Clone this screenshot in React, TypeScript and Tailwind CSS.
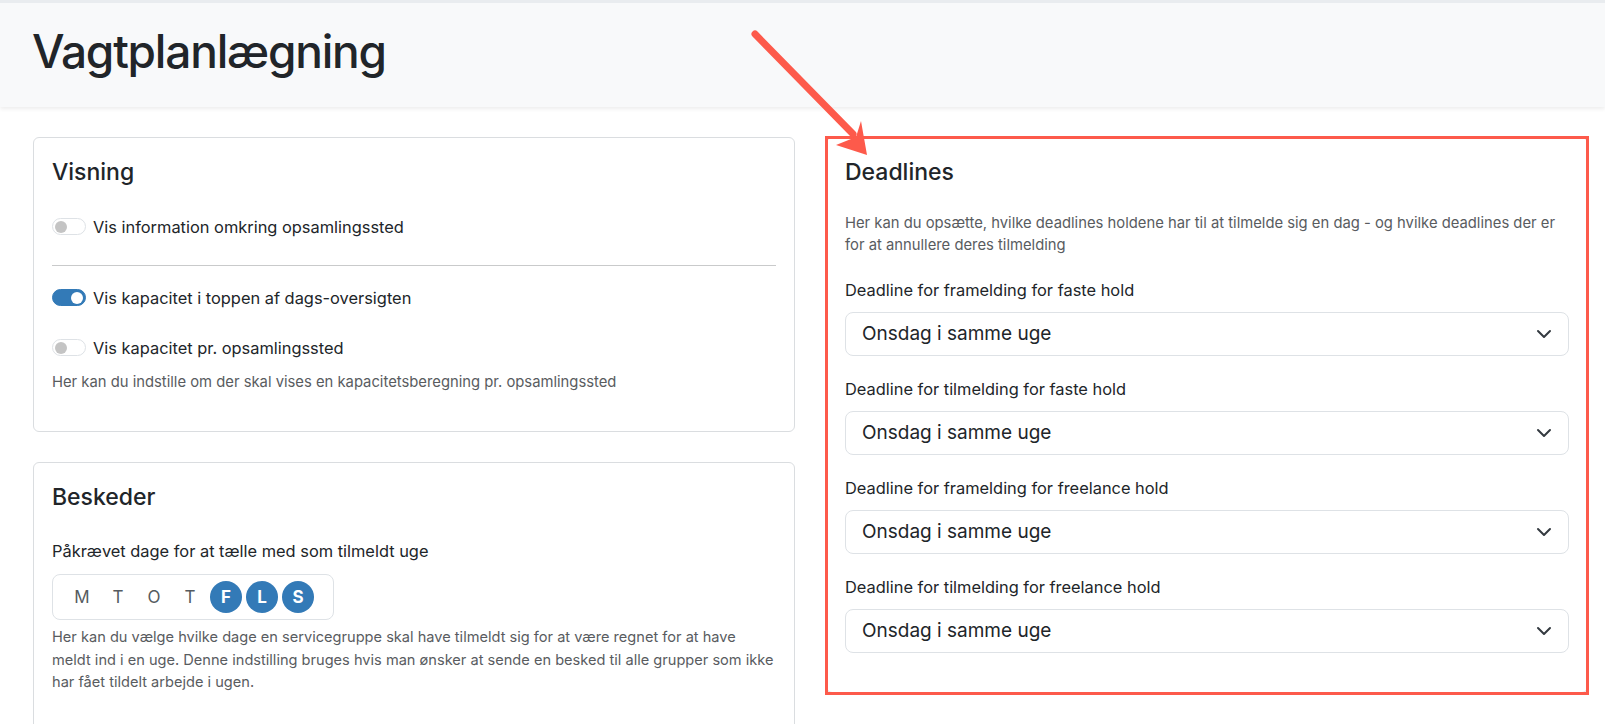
import React from "react";

const deadlines = [
  "Deadline for framelding for faste hold",
  "Deadline for tilmelding for faste hold",
  "Deadline for framelding for freelance hold",
  "Deadline for tilmelding for freelance hold",
];

const days = [
  { label: "M", on: false },
  { label: "T", on: false },
  { label: "O", on: false },
  { label: "T", on: false },
  { label: "F", on: true },
  { label: "L", on: true },
  { label: "S", on: true },
];

function Toggle({ on }: { on: boolean }) {
  return (
    <span
      className={
        on
          ? "flex items-center justify-end w-[34px] h-[17px] rounded-full border border-[#337ab7] bg-[#337ab7] px-[2px] shrink-0"
          : "flex items-center justify-start w-[34px] h-[17px] rounded-full border border-[#dee2e6] bg-white px-[2px] shrink-0"
      }
    >
      <span className={on ? "w-[12px] h-[12px] rounded-full bg-white" : "w-[12px] h-[12px] rounded-full bg-[#c4c4c4]"} />
    </span>
  );
}

function SwitchRow({ on, label, className }: { on: boolean; label: string; className: string }) {
  return (
    <div className={"flex items-center h-6 " + className}>
      <Toggle on={on} />
      <span className="ml-[7px] text-[16.4px] leading-6 text-[#212529]">{label}</span>
    </div>
  );
}

function SelectBox() {
  return (
    <div className="flex items-center justify-between h-[44px] border border-[#dee2e6] rounded-lg bg-white pl-[16px] pr-[16px]">
      <span className="text-[19px] leading-[30px] text-[#212529]">Onsdag i samme uge</span>
      <svg width="16" height="16" viewBox="0 0 16 16" fill="none">
        <path d="m2 5 6 6 6-6" stroke="#343a40" strokeWidth="2" strokeLinecap="round" strokeLinejoin="round" />
      </svg>
    </div>
  );
}

export default function App() {
  return (
    <div className="relative h-[724px] overflow-hidden bg-white font-['Inter',sans-serif] text-[#212529]">
      {/* Header */}
      <div className="border-t-[3px] border-[#e9ecef] bg-[#f8f9fa] shadow-[0_2px_4px_rgba(0,0,0,0.075)] pt-[21px] pb-[28px] pl-[32px]">
        <h1 className="text-[46px] leading-[1.2] font-medium tracking-[-1.2px]">Vagtplanlægning</h1>
      </div>

      <div className="grid grid-cols-[762px_762px] gap-[31px] pl-[33px] pt-[30px]">
        {/* Left column */}
        <div>
          <div className="border border-[#dadde0] rounded-md px-[18px] pt-[21px] pb-[38px]">
            <h4 className="text-[23px] leading-[1.2] font-medium">Visning</h4>
            <SwitchRow on={false} label="Vis information omkring opsamlingssted" className="mt-[28px]" />
            <div className="mt-[26px] h-px bg-[#c9cacb]" />
            <SwitchRow on={true} label="Vis kapacitet i toppen af dags-oversigten" className="mt-[20px]" />
            <SwitchRow on={false} label="Vis kapacitet pr. opsamlingssted" className="mt-[26px]" />
            <p className="mt-[12px] text-[14.8px] leading-[21px] text-[#595c5f]">
              Her kan du indstille om der skal vises en kapacitetsberegning pr. opsamlingssted
            </p>
          </div>

          <div className="mt-[30px] border border-[#dadde0] rounded-md px-[18px] pt-[21px] pb-[80px]">
            <h4 className="text-[23px] leading-[1.2] font-medium">Beskeder</h4>
            <div className="mt-[28px] text-[16.4px] leading-6">Påkrævet dage for at tælle med som tilmeldt uge</div>
            <div className="mt-[11px] inline-flex items-center gap-[4px] h-[46px] border border-[#dee2e6] rounded-lg pl-[13px] pr-[19px]">
              {days.map((d, i) =>
                d.on ? (
                  <span key={i} className="flex items-center justify-center w-[32px] h-[32px] rounded-full bg-[#337ab7] text-white font-bold text-[17px]">
                    {d.label}
                  </span>
                ) : (
                  <span key={i} className="flex items-center justify-center w-[32px] h-[32px] text-[#555b60] text-[17px]">
                    {d.label}
                  </span>
                )
              )}
            </div>
            <p className="mt-[6px] -mr-[4px] text-[14.6px] leading-[22.5px] text-[#595c5f]">
              Her kan du vælge hvilke dage en servicegruppe skal have tilmeldt sig for at være regnet for at have
              <br />
              meldt ind i en uge. Denne indstilling bruges hvis man ønsker at sende en besked til alle grupper som ikke har fået tildelt arbejde i ugen.
            </p>
          </div>
        </div>

        {/* Right column */}
        <div>
          <div className="relative border border-[#dadde0] rounded-md px-[18px] pt-[21px] pb-[39px]">
            <h4 className="text-[23px] leading-[1.2] font-medium">Deadlines</h4>
            <p className="mt-[25px] text-[14.8px] leading-[22.5px] text-[#595c5f]">
              Her kan du opsætte, hvilke deadlines holdene har til at tilmelde sig en dag - og hvilke deadlines der er for at annullere deres tilmelding
            </p>
            {deadlines.map((label) => (
              <div key={label} className="mt-[21px]">
                <div className="text-[16.4px] leading-6">{label}</div>
                <div className="mt-[10px]">
                  <SelectBox />
                </div>
              </div>
            ))}
            {/* annotation highlight */}
            <div className="absolute -top-[2px] -left-[2px] -right-[2px] -bottom-[3px] border-[3px] border-[#fd5a4b] pointer-events-none" />
          </div>
        </div>
      </div>

      {/* annotation arrow */}
      <svg className="absolute top-0 left-0 pointer-events-none" width="1605" height="724" viewBox="0 0 1605 724">
        <line x1="755" y1="34" x2="853" y2="134" stroke="#fd5a4b" strokeWidth="7" strokeLinecap="round" />
        <path d="M867 155 L861 121 L856 137 L836 145 Z" fill="#fd5a4b" />
      </svg>
    </div>
  );
}
